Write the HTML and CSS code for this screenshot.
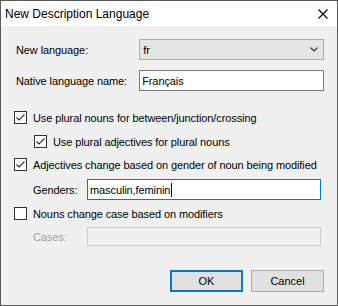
FILE: index.html
```html
<!DOCTYPE html>
<html lang="en">
<head>
    <meta charset="UTF-8">
    <title>New Description Language</title>
    <link rel="stylesheet" href="styles.css">
</head>
<body>
    <div class="window">
        <div class="titlebar">
            <span class="title">New Description Language</span>
            <svg class="close" width="10" height="10" viewBox="0 0 10 10">
                <path d="M0.5 0.5 L9.5 9.5 M9.5 0.5 L0.5 9.5" stroke="#000" stroke-width="1.1" fill="none"/>
            </svg>
        </div>
        <div class="content">
            <!-- Language -->
            <div class="row first">
                <span class="label wide">New language:</span>
                <div class="combo">
                    <span>fr</span>
                    <svg width="8" height="5" viewBox="0 0 8 5">
                        <polyline points="0.5,0.5 4,4 7.5,0.5" stroke="#333" stroke-width="1.1" fill="none"/>
                    </svg>
                </div>
            </div>
            <div class="row second">
                <span class="label wide">Native language name:</span>
                <div class="field name">Français</div>
            </div>

            <!-- Options -->
            <div class="check c1">
                <span class="box checked"><svg width="11" height="11" viewBox="0 0 11 11"><polyline points="1.5,5.5 4,8 9.5,2.5" stroke="#333" stroke-width="1.2" fill="none"/></svg></span>
                <span>Use plural nouns for between/junction/crossing</span>
            </div>
            <div class="check c2 indent">
                <span class="box checked"><svg width="11" height="11" viewBox="0 0 11 11"><polyline points="1.5,5.5 4,8 9.5,2.5" stroke="#333" stroke-width="1.2" fill="none"/></svg></span>
                <span>Use plural adjectives for plural nouns</span>
            </div>
            <div class="check c3">
                <span class="box checked"><svg width="11" height="11" viewBox="0 0 11 11"><polyline points="1.5,5.5 4,8 9.5,2.5" stroke="#333" stroke-width="1.2" fill="none"/></svg></span>
                <span>Adjectives change based on gender of noun being modified</span>
            </div>
            <div class="row sub genders">
                <span class="label short">Genders:</span>
                <div class="field focused">masculin,feminin<span class="caret"></span></div>
            </div>
            <div class="check c4">
                <span class="box"></span>
                <span>Nouns change case based on modifiers</span>
            </div>
            <div class="row sub cases">
                <span class="label short disabled">Cases:</span>
                <div class="field off"></div>
            </div>

            <!-- Buttons -->
            <div class="buttons">
                <button class="btn default">OK</button>
                <button class="btn">Cancel</button>
            </div>
        </div>
    </div>
</body>
</html>
```

FILE: styles.css
```css
/* Basic Reset */
body {
    margin: 0;
    padding: 0;
    background: #f0f0f0;
    font-family: 'Liberation Sans', Arial, sans-serif;
    font-size: 11px;
    letter-spacing: -0.1px;
    color: #000;
}

.window {
    width: 338px;
    height: 306px;
    box-sizing: border-box;
    border: 1px solid #5a5a5a;
    background: #f0f0f0;
    display: flex;
    flex-direction: column;
}

.titlebar {
    height: 25px;
    background: #fff;
    display: flex;
    align-items: center;
    justify-content: space-between;
    padding-left: 4px;
    padding-right: 9px;
}

.title {
    font-size: 12px;
    letter-spacing: 0;
}

.content {
    padding: 13px 13px 0 15px;
    display: flex;
    flex-direction: column;
}

.row {
    display: flex;
    align-items: center;
}

.row.second {
    margin-top: 10px;
}

.label.wide {
    width: 124px;
}

.label.short {
    width: 54px;
}

.label.disabled {
    color: #a0a0a0;
}

.combo {
    width: 186px;
    height: 21px;
    box-sizing: border-box;
    border: 1px solid #adadad;
    background: #e5e5e5;
    display: flex;
    align-items: center;
    justify-content: space-between;
    padding: 0 5px 0 3px;
}

.field {
    height: 21px;
    box-sizing: border-box;
    border: 1px solid #7a7a7a;
    background: #fff;
    display: flex;
    align-items: center;
    padding-left: 2px;
}

.field.name {
    width: 186px;
}

.field.focused {
    width: 234px;
    border-color: #0078d7;
}

.field.off {
    width: 234px;
    height: 19px;
    border-color: #cccccc;
    background: #f0f0f0;
}

.caret {
    width: 1px;
    height: 14px;
    background: #000;
    margin-left: 1px;
}

.check {
    display: flex;
    align-items: center;
    height: 13px;
    margin-left: -2px;
}

.check .box {
    width: 13px;
    height: 13px;
    box-sizing: border-box;
    border: 1px solid #333;
    background: #fff;
    margin-right: 6px;
    display: flex;
    align-items: center;
    justify-content: center;
}

.check.indent {
    margin-left: 18px;
}

.check.c1 {
    margin-top: 20px;
}

.check.c2 {
    margin-top: 11px;
}

.check.c3 {
    margin-top: 10px;
}

.row.sub {
    padding-left: 17px;
}

.row.genders {
    margin-top: 8px;
}

.check.c4 {
    margin-top: 7px;
}

.row.cases {
    margin-top: 7px;
}

.buttons {
    display: flex;
    justify-content: flex-end;
    gap: 8px;
    margin-top: 24px;
}

.btn {
    width: 73px;
    height: 22px;
    box-sizing: border-box;
    border: 1px solid #adadad;
    background: #e1e1e1;
    font-family: 'Liberation Sans', Arial, sans-serif;
    font-size: 11px;
    color: #000;
    padding: 0;
}

.btn.default {
    border: 2px solid #0078d7;
}
```
